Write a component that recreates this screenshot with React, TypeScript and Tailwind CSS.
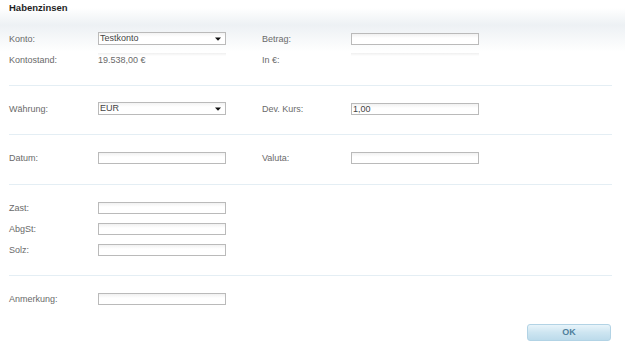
import React from "react";

const font = { fontFamily: '"Liberation Sans", Arial, sans-serif' };

function Label({ children }: { children: React.ReactNode }) {
  return <div className="w-[89px] shrink-0 text-[9px] leading-[12px] text-[#6a6a6a]">{children}</div>;
}

function Input({ value = "" }: { value?: string }) {
  return (
    <div className="w-[128px] h-[12px] shrink-0 border border-[#bababa] bg-[linear-gradient(to_bottom,#f1f1f1,#ffffff_4px)] text-[9px] leading-[10px] text-[#444] pl-[1px]">
      {value}
    </div>
  );
}

function Select({ value }: { value: string }) {
  return (
    <div className="w-[128px] h-[13px] shrink-0 border border-[#bababa] bg-[linear-gradient(to_bottom,#f3f3f3,#ffffff_4px)] flex items-center justify-between text-[9px] leading-[11px] text-[#444] pl-[1px] pr-[4px]">
      <span>{value}</span>
      <svg width="6" height="4" viewBox="0 0 6 4">
        <path d="M0 0.5 H6 L3 3.8 Z" fill="#111" />
      </svg>
    </div>
  );
}

function ReadOnly({ value = "" }: { value?: string }) {
  return (
    <div className="w-[128px] h-[13px] shrink-0 bg-[linear-gradient(to_bottom,#efefef,#ffffff_3px)] text-[9px] leading-[12px] text-[#6a6a6a] pt-[1px]">
      {value}
    </div>
  );
}

function Sep() {
  return <div className="h-px bg-[#e4eef4]" />;
}

function Row({ children, className = "" }: { children: React.ReactNode; className?: string }) {
  return <div className={"flex items-center h-[13px] " + className}>{children}</div>;
}

export default function App() {
  return (
    <div
      style={font}
      className="w-[625px] h-[359px] bg-[linear-gradient(to_bottom,#ffffff_0px,#ffffff_8px,#edf1f4_25px,#ffffff_52px)] pl-[9px] pr-[13px]"
    >
      <div className="h-[32px] pt-[2px] text-[9.5px] font-bold leading-[12px] text-[#1f1f1f]">Habenzinsen</div>

      <Row>
        <Label>Konto:</Label>
        <Select value="Testkonto" />
        <div className="w-[36px] shrink-0" />
        <Label>Betrag:</Label>
        <Input />
      </Row>
      <Row className="mt-[8px]">
        <Label>Kontostand:</Label>
        <ReadOnly value="19.538,00 €" />
        <div className="w-[36px] shrink-0" />
        <Label>In €:</Label>
        <ReadOnly />
      </Row>
      <div className="mt-[19px]">
        <Sep />
      </div>

      <Row className="mt-[16px]">
        <Label>Währung:</Label>
        <Select value="EUR" />
        <div className="w-[36px] shrink-0" />
        <Label>Dev. Kurs:</Label>
        <Input value="1,00" />
      </Row>
      <div className="mt-[19px]">
        <Sep />
      </div>

      <Row className="mt-[16px]">
        <Label>Datum:</Label>
        <Input />
        <div className="w-[36px] shrink-0" />
        <Label>Valuta:</Label>
        <Input />
      </Row>
      <div className="mt-[20px]">
        <Sep />
      </div>

      <div className="flex flex-col gap-[8px] mt-[16px]">
        <Row>
          <Label>Zast:</Label>
          <Input />
        </Row>
        <Row>
          <Label>AbgSt:</Label>
          <Input />
        </Row>
        <Row>
          <Label>Solz:</Label>
          <Input />
        </Row>
      </div>
      <div className="mt-[19px]">
        <Sep />
      </div>

      <Row className="mt-[16px]">
        <Label>Anmerkung:</Label>
        <Input />
      </Row>

      <div className="flex justify-end mt-[19px] pr-[1px]">
        <button className="w-[84px] h-[17px] rounded-[3px] border border-[#b2d3e5] bg-[linear-gradient(to_bottom,#e8f4fa,#cde5f1_50%,#bcdbeb)] text-[9px] font-bold text-[#4f809c] leading-[15px]">
          OK
        </button>
      </div>
    </div>
  );
}
